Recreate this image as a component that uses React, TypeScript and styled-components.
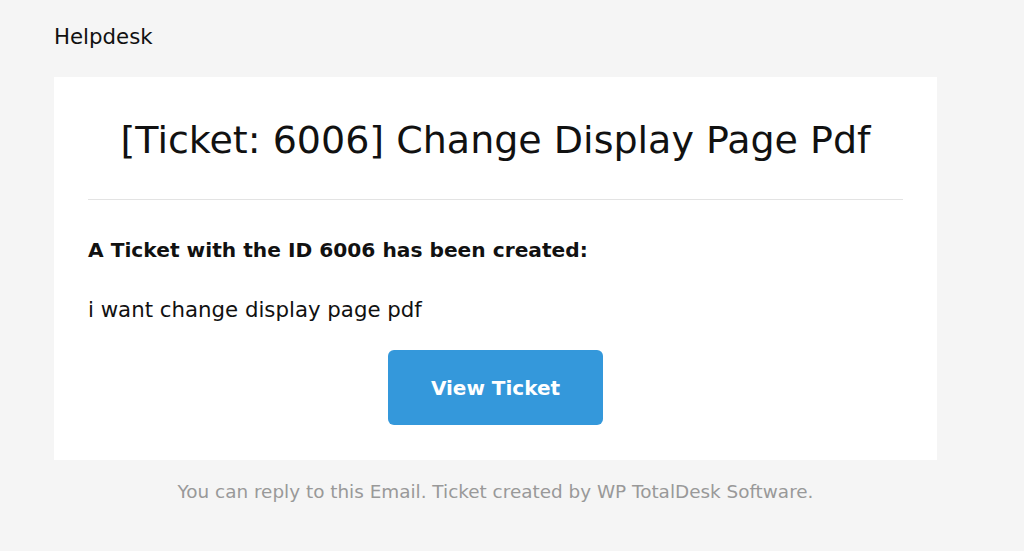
import React from "react";
import styled, { createGlobalStyle } from "styled-components";

const Global = createGlobalStyle`
  html, body { margin: 0; padding: 0; background: #f5f5f5; }
  body { font-family: "DejaVu Sans", Verdana, sans-serif; color: #111; }
`;

const Page = styled.div`
  width: 1024px;
  height: 551px;
  box-sizing: border-box;
  padding: 26px 87px 0 54px;
  display: flex;
  flex-direction: column;
`;

const Brand = styled.div`
  font-size: 21.3px;
  line-height: 22px;
  color: #111;
  height: 51px;
`;

const Card = styled.div`
  background: #fff;
  box-sizing: border-box;
  width: 883px;
  height: 383px;
  padding: 0 34px;
  display: flex;
  flex-direction: column;
`;

const Title = styled.h1`
  margin: 0;
  font-weight: normal;
  font-size: 38px;
  line-height: 40px;
  text-align: center;
  padding: 43px 0 39px;
  border-bottom: 1px solid #e3e3e3;
`;

const Lead = styled.p`
  margin: 37px 0 0;
  font-size: 20.2px;
  font-weight: bold;
  line-height: 26px;
`;

const Body = styled.p`
  margin: 34px 0 0;
  font-size: 21.3px;
  line-height: 26px;
`;

const ButtonRow = styled.div`
  display: flex;
  justify-content: center;
  margin-top: 27px;
`;

const Button = styled.a`
  display: flex;
  align-items: center;
  justify-content: center;
  width: 215px;
  height: 75px;
  background: #3498db;
  border-radius: 6px;
  color: #fff;
  font-weight: bold;
  font-size: 20px;
  text-decoration: none;
`;

const Footer = styled.div`
  width: 883px;
  text-align: center;
  color: #999;
  font-size: 18.4px;
  line-height: 20px;
  margin-top: 22px;
`;

export default function App() {
  return (
    <>
      <Global />
      <Page>
        <Brand>Helpdesk</Brand>
        <Card>
          <Title>[Ticket: 6006] Change Display Page Pdf</Title>
          <Lead>A Ticket with the ID 6006 has been created:</Lead>
          <Body>i want change display page pdf</Body>
          <ButtonRow>
            <Button href="#">View Ticket</Button>
          </ButtonRow>
        </Card>
        <Footer>You can reply to this Email. Ticket created by WP TotalDesk Software.</Footer>
      </Page>
    </>
  );
}
